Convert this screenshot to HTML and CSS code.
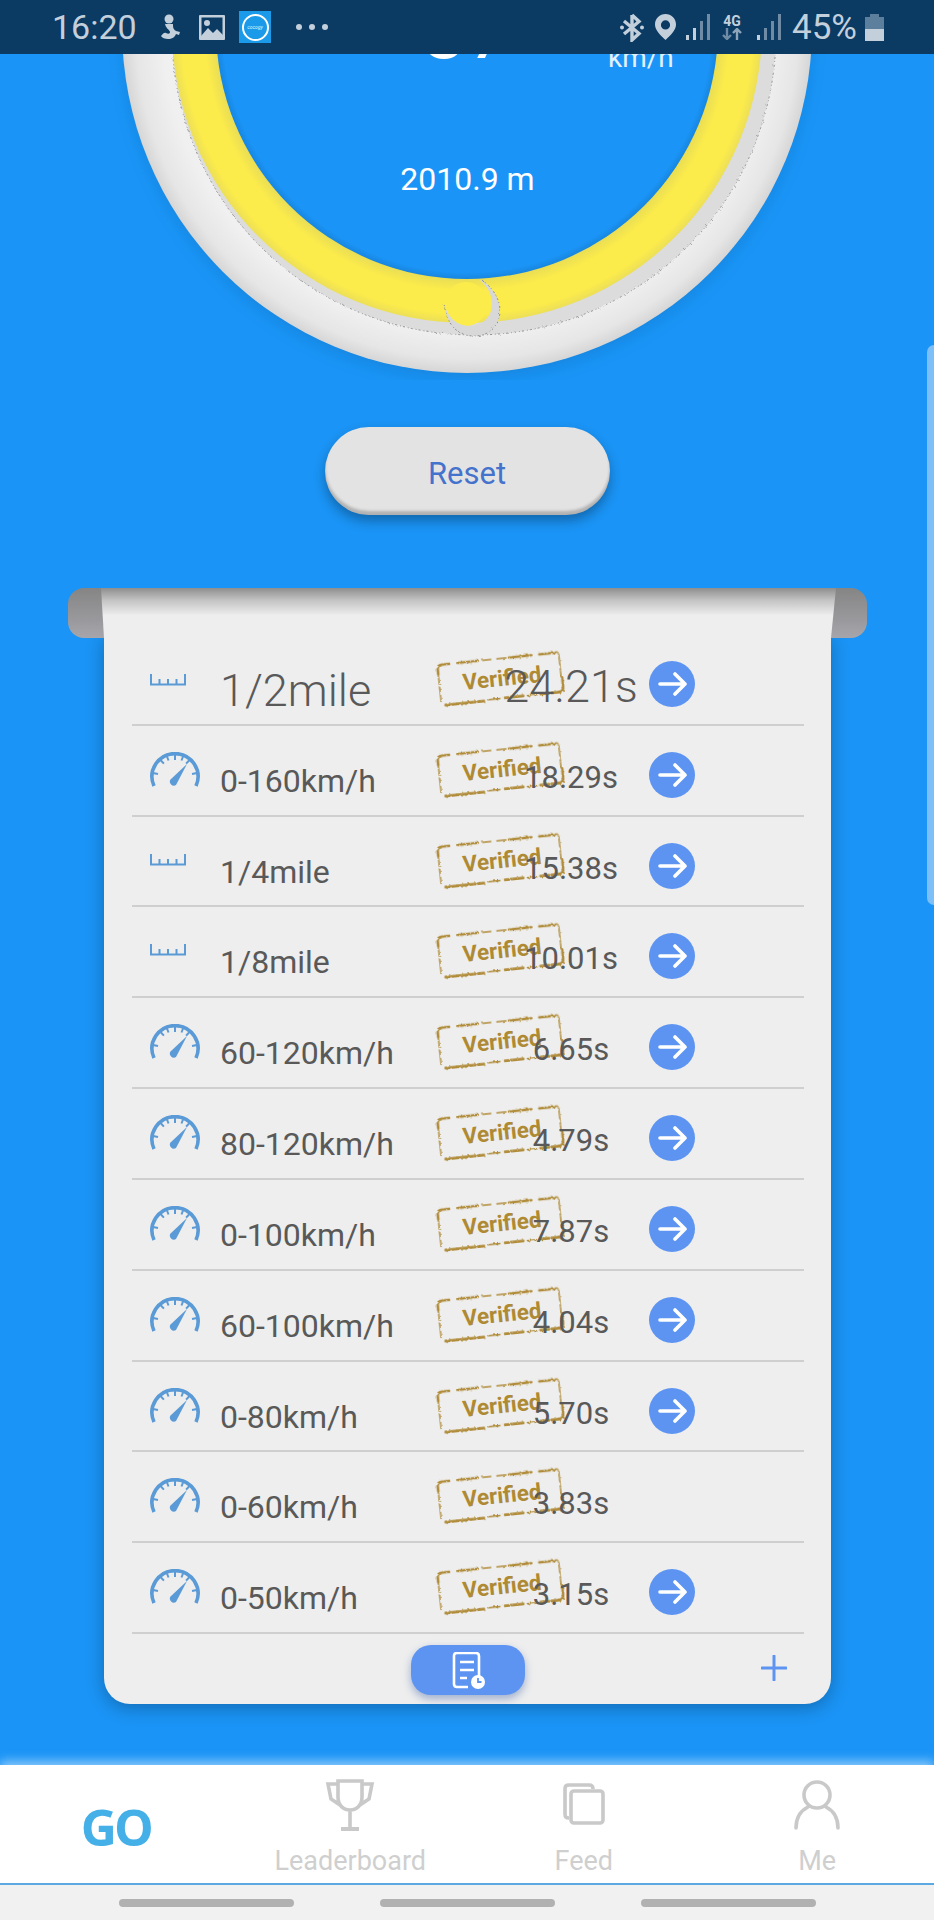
FILE: index.html
```html
<!DOCTYPE html>
<html lang="en">
<head>
  <meta charset="utf-8">
  <meta name="viewport" content="width=device-width, initial-scale=1">
  <title>Drag run</title>
  <link rel="stylesheet" href="styles.css">
</head>
<body>
  <svg class="defs" width="0" height="0">
    <defs>
      <filter id="rough" x="-5%" y="-10%" width="110%" height="120%">
        <feTurbulence type="fractalNoise" baseFrequency="0.45" numOctaves="2" seed="4"/>
        <feDisplacementMap in="SourceGraphic" scale="3"/>
      </filter>
      <path id="arrow-shape" d="M2 13h25M17 3l10 10-10 10" fill="none" stroke="#fff" stroke-width="3.600" stroke-linecap="round" stroke-linejoin="round"/>
      <path id="ruler-shape" d="M1 0v10.500h34V0M9.500 5v5M18 5v5M26.500 5v5" fill="none" stroke="#5a9ad6" stroke-width="2"/>
      <g id="dial-shape" fill="none" stroke="#5a9ad6">
        <path d="M4 34A23 23 0 1 1 46 34" stroke-width="3.600"/>
        <path d="M25 3v5M10.500 8l3.400 3.600M39.500 8l-3.400 3.600M3 21l5 1M47 21l-5 1M17 4.500l1.500 4M33 4.500l-1.500 4" stroke-width="2"/>
        <path d="M37 12L20.500 27.500a4 4 0 0 0 5.500 5.500z" fill="#5a9ad6" stroke="none"/>
      </g>
      <g id="stamp-shape" fill="none" stroke="#b08c3a" stroke-linecap="round" filter="url(#rough)">
        <path d="M3 12v28M123 5v22" stroke-width="1.400" stroke-dasharray="6 1 3 2 4 1"/>
        <path d="M3 12V7q0-4 5-4h7M23 3h20M74 3h22M104 3h18M124 28v9q0 5-5 5h-18M7 43h38M66 42h18" stroke-width="2.600"/>
        <path d="M48 3h8M62 3h9M49 42h12M88 42h10" stroke-width="1.400"/>
      </g>
    </defs>
  </svg>

  <div class="screen">
    <div class="status">
      <span class="clock">16:20</span>
      <svg class="st-person" width="24" height="26" viewBox="0 0 24 26"><circle cx="12" cy="5" r="4.500" fill="#c3d0dc"/><path d="M8 10h8c0 3 0 5 3 7l4 1-1 3-3-1c-1 3-4 5-8 5-3 0-6-1-7-3 2-3 4-4 5-3 2 1 4 1 4-1 0-2-5-4-5-9z" fill="#c3d0dc"/></svg>
      <svg class="st-photo" width="26" height="25" viewBox="0 0 26 25"><rect width="26" height="25" rx="1" fill="#c3d0dc"/><rect x="2.500" y="2.500" width="21" height="20" fill="#0b3a63"/><circle cx="8" cy="8" r="3" fill="#c3d0dc"/><path d="M2 21l7-8 5 5 4-4 6 6v5H2z" fill="#c3d0dc"/></svg>
      <span class="app-ico"><span class="app-ring">cocogy</span></span>
      <span class="dots"><i></i><i></i><i></i></span>
      <span class="st-right">
        <svg class="st-bt" width="24" height="29" viewBox="0 0 24 29"><path d="M12 2v25l7-6.500L4 8M12 2l7 6.500L4 21" fill="none" stroke="#c3d0dc" stroke-width="3.400"/><circle cx="2" cy="14.500" r="2" fill="#c3d0dc"/><circle cx="22" cy="14.500" r="2" fill="#c3d0dc"/></svg>
        <svg class="st-pin" width="21" height="26" viewBox="0 0 22 27"><path fill-rule="evenodd" d="M11 0c6 0 11 4.700 11 11 0 6-6 12-11 16C6 23 0 17 0 11 0 4.700 5 0 11 0zm0 6.500a4.800 4.800 0 1 0 0 9.600 4.800 4.800 0 0 0 0-9.600z" fill="#c3d0dc"/></svg>
        <svg class="st-bars" width="24" height="26" viewBox="0 0 24 26"><rect x="0" y="21" width="3" height="5" fill="#c3d0dc"/><rect x="7" y="14" width="3" height="12" fill="#c3d0dc"/><rect x="14" y="7" width="3" height="19" fill="#6f8ba5"/><rect x="21" y="0" width="3" height="26" fill="#6f8ba5"/></svg>
        <span class="net"><b>4G</b><svg width="20" height="12" viewBox="0 0 20 12"><path d="M5 0v10M1 7l4 4 4-4" fill="none" stroke="#6f8ba5" stroke-width="2.400"/><path d="M15 12V2M11 5l4-4 4 4" fill="none" stroke="#8ea4b9" stroke-width="2.400"/></svg></span>
        <svg class="st-bars2" width="24" height="26" viewBox="0 0 24 26"><rect x="0" y="21" width="3" height="5" fill="#c3d0dc"/><rect x="7" y="14" width="3" height="12" fill="#6f8ba5"/><rect x="14" y="7" width="3" height="19" fill="#6f8ba5"/><rect x="21" y="0" width="3" height="26" fill="#6f8ba5"/></svg>
        <span class="pct">45%</span>
        <svg class="st-batt" width="19" height="27" viewBox="0 0 19 27"><path d="M5 0h9v3h5v24H0V3h5z" fill="#5c7f9d"/><rect y="15" width="19" height="12" fill="#c3d0dc"/></svg>
      </span>
    </div>

    <div class="gauge">
      <svg class="ring" width="934" height="380" viewBox="0 0 934 380">
        <defs>
          <radialGradient id="shell" gradientUnits="userSpaceOnUse" cx="467" cy="28" r="345">
            <stop offset="0.88" stop-color="#f0f0f0"/>
            <stop offset="0.96" stop-color="#e6e6e6"/>
            <stop offset="1" stop-color="#d6d6d6"/>
          </radialGradient>
          <radialGradient id="lemon" gradientUnits="userSpaceOnUse" cx="467" cy="28" r="295">
            <stop offset="0.85" stop-color="#e9dd55"/>
            <stop offset="0.89" stop-color="#fbeb4b"/>
            <stop offset="0.97" stop-color="#fbeb4b"/>
            <stop offset="1" stop-color="#ecdf58"/>
          </radialGradient>
          <radialGradient id="inner" gradientUnits="userSpaceOnUse" cx="467" cy="28" r="252">
            <stop offset="0.97" stop-color="#1a94f6"/>
            <stop offset="1" stop-color="#1784dc"/>
          </radialGradient>
          <filter id="soft" x="-10%" y="-10%" width="120%" height="120%"><feGaussianBlur stdDeviation="7"/></filter>
        </defs>
        <circle cx="467" cy="34" r="345" fill="#0f6fbc" opacity=".35" filter="url(#soft)"/>
        <circle cx="467" cy="28" r="345" fill="url(#shell)"/>
        <circle cx="474" cy="33" r="302" fill="#dcdcdc" stroke="#8f8f8f" stroke-width="1" stroke-dasharray="2 2 1 3" filter="url(#rough)"/>
        <circle cx="467" cy="28" r="295" fill="url(#lemon)"/>
        <circle cx="467" cy="28" r="251" fill="url(#inner)"/>
        <circle cx="466" cy="304" r="22" fill="#fbeb4b"/>
        <path d="M482 280c12 9 18 20 18 31 0 14-10 25-26 25-15 0-27-9-30-33 3 13 12 23 26 23 12 0 22-9 22-22 0-9-4-17-12-24z" fill="#d8d8d8"/>
        <path d="M482 280c12 9 18 20 18 31 0 14-10 25-26 25-15 0-27-9-30-33" fill="none" stroke="#8f8f8f" stroke-dasharray="2 2 1 3" filter="url(#rough)"/>
      </svg>
      <span class="speed-num">37</span>
      <span class="speed-unit">km/h</span>
      <span class="dist">2010.9 m</span>
    </div>

    <div class="btn-wrap"><div class="reset">Reset</div></div>

    <div class="sheet">
      <div class="roller"></div>
      <div class="fold"></div>
      <div class="card">
        <div class="rows">
          <div class="row big">
            <svg class="ruler" width="36" height="12" viewBox="0 0 36 12"><use href="#ruler-shape"/></svg>
            <span class="name">1/2mile</span>
            <svg class="stamp" viewBox="0 0 126 45"><use href="#stamp-shape"/></svg>
            <span class="stamp-txt">Verified</span>
            <span class="time">24.21s</span>
            <span class="go"><svg width="29" height="26" viewBox="0 0 29 26"><use href="#arrow-shape"/></svg></span>
          </div>
          <div class="row">
            <svg class="dial" width="50" height="36" viewBox="0 0 50 36"><use href="#dial-shape"/></svg>
            <span class="name">0-160km/h</span>
            <svg class="stamp" viewBox="0 0 126 45"><use href="#stamp-shape"/></svg>
            <span class="stamp-txt">Verified</span>
            <span class="time">18.29s</span>
            <span class="go"><svg width="29" height="26" viewBox="0 0 29 26"><use href="#arrow-shape"/></svg></span>
          </div>
          <div class="row">
            <svg class="ruler" width="36" height="12" viewBox="0 0 36 12"><use href="#ruler-shape"/></svg>
            <span class="name">1/4mile</span>
            <svg class="stamp" viewBox="0 0 126 45"><use href="#stamp-shape"/></svg>
            <span class="stamp-txt">Verified</span>
            <span class="time">15.38s</span>
            <span class="go"><svg width="29" height="26" viewBox="0 0 29 26"><use href="#arrow-shape"/></svg></span>
          </div>
          <div class="row">
            <svg class="ruler" width="36" height="12" viewBox="0 0 36 12"><use href="#ruler-shape"/></svg>
            <span class="name">1/8mile</span>
            <svg class="stamp" viewBox="0 0 126 45"><use href="#stamp-shape"/></svg>
            <span class="stamp-txt">Verified</span>
            <span class="time">10.01s</span>
            <span class="go"><svg width="29" height="26" viewBox="0 0 29 26"><use href="#arrow-shape"/></svg></span>
          </div>
          <div class="row">
            <svg class="dial" width="50" height="36" viewBox="0 0 50 36"><use href="#dial-shape"/></svg>
            <span class="name">60-120km/h</span>
            <svg class="stamp" viewBox="0 0 126 45"><use href="#stamp-shape"/></svg>
            <span class="stamp-txt">Verified</span>
            <span class="time">6.65s</span>
            <span class="go"><svg width="29" height="26" viewBox="0 0 29 26"><use href="#arrow-shape"/></svg></span>
          </div>
          <div class="row">
            <svg class="dial" width="50" height="36" viewBox="0 0 50 36"><use href="#dial-shape"/></svg>
            <span class="name">80-120km/h</span>
            <svg class="stamp" viewBox="0 0 126 45"><use href="#stamp-shape"/></svg>
            <span class="stamp-txt">Verified</span>
            <span class="time">4.79s</span>
            <span class="go"><svg width="29" height="26" viewBox="0 0 29 26"><use href="#arrow-shape"/></svg></span>
          </div>
          <div class="row">
            <svg class="dial" width="50" height="36" viewBox="0 0 50 36"><use href="#dial-shape"/></svg>
            <span class="name">0-100km/h</span>
            <svg class="stamp" viewBox="0 0 126 45"><use href="#stamp-shape"/></svg>
            <span class="stamp-txt">Verified</span>
            <span class="time">7.87s</span>
            <span class="go"><svg width="29" height="26" viewBox="0 0 29 26"><use href="#arrow-shape"/></svg></span>
          </div>
          <div class="row">
            <svg class="dial" width="50" height="36" viewBox="0 0 50 36"><use href="#dial-shape"/></svg>
            <span class="name">60-100km/h</span>
            <svg class="stamp" viewBox="0 0 126 45"><use href="#stamp-shape"/></svg>
            <span class="stamp-txt">Verified</span>
            <span class="time">4.04s</span>
            <span class="go"><svg width="29" height="26" viewBox="0 0 29 26"><use href="#arrow-shape"/></svg></span>
          </div>
          <div class="row">
            <svg class="dial" width="50" height="36" viewBox="0 0 50 36"><use href="#dial-shape"/></svg>
            <span class="name">0-80km/h</span>
            <svg class="stamp" viewBox="0 0 126 45"><use href="#stamp-shape"/></svg>
            <span class="stamp-txt">Verified</span>
            <span class="time">5.70s</span>
            <span class="go"><svg width="29" height="26" viewBox="0 0 29 26"><use href="#arrow-shape"/></svg></span>
          </div>
          <div class="row">
            <svg class="dial" width="50" height="36" viewBox="0 0 50 36"><use href="#dial-shape"/></svg>
            <span class="name">0-60km/h</span>
            <svg class="stamp" viewBox="0 0 126 45"><use href="#stamp-shape"/></svg>
            <span class="stamp-txt">Verified</span>
            <span class="time">3.83s</span>
          </div>
          <div class="row">
            <svg class="dial" width="50" height="36" viewBox="0 0 50 36"><use href="#dial-shape"/></svg>
            <span class="name">0-50km/h</span>
            <svg class="stamp" viewBox="0 0 126 45"><use href="#stamp-shape"/></svg>
            <span class="stamp-txt">Verified</span>
            <span class="time">3.15s</span>
            <span class="go"><svg width="29" height="26" viewBox="0 0 29 26"><use href="#arrow-shape"/></svg></span>
          </div>
        </div>
        <div class="card-foot">
          <span class="foot-side"></span>
          <span class="hist">
            <svg width="34" height="37" viewBox="0 0 34 37"><path d="M17 35H6c-2 0-3-1-3-3V4c0-2 1-3 3-3h19c2 0 3 1 3 3v20" fill="none" stroke="#fff" stroke-width="2.600"/><path d="M9 10h14M9 18h14M9 26h7" stroke="#fff" stroke-width="2.600" fill="none"/><circle cx="27" cy="30" r="7" fill="#fff"/><path d="M27 26v4h3.500" stroke="#5d94f2" stroke-width="1.800" fill="none"/></svg>
          </span>
          <span class="foot-side foot-end">
            <svg width="26" height="26" viewBox="0 0 26 26"><path d="M13 1v24M1 13h24" stroke="#5d94f2" stroke-width="3" stroke-linecap="round"/></svg>
          </span>
        </div>
      </div>
    </div>

    <div class="scrollbar"></div>
    <div class="spacer"></div>

    <nav class="tabs">
      <div class="tab tab-go"><span class="go-txt">GO</span></div>
      <div class="tab">
        <svg width="50" height="52" viewBox="0 0 50 52"><path d="M13 2h24v16c0 8-5 13-12 13s-12-5-12-13zM13 5H3l3 15 9 6M37 5h10l-3 15-9 6M25 31v17" fill="none" stroke="#c9c9c9" stroke-width="3.600"/><path d="M16 48h18v4H16z" fill="#c9c9c9"/></svg>
        <span>Leaderboard</span>
      </div>
      <div class="tab">
        <svg class="ico-feed" width="42" height="42" viewBox="0 0 42 42"><path d="M6 35c-3 0-4-1-4-4V6c0-3 1-4 4-4h20c3 0 4 1 4 4" fill="none" stroke="#c9c9c9" stroke-width="3.600"/><rect x="8" y="8" width="32" height="32" rx="3" fill="#fff" stroke="#c9c9c9" stroke-width="3.600"/></svg>
        <span>Feed</span>
      </div>
      <div class="tab">
        <svg class="ico-me" width="46" height="50" viewBox="0 0 46 50"><ellipse cx="23" cy="15" rx="13" ry="13" fill="none" stroke="#c9c9c9" stroke-width="3.600"/><path d="M2 48c0-11 4-17 12-21M44 48c0-11-4-17-12-21" fill="none" stroke="#c9c9c9" stroke-width="3.600" stroke-linecap="round"/></svg>
        <span>Me</span>
      </div>
    </nav>
    <div class="softkeys"><i></i><i></i><i></i></div>
  </div>
</body>
</html>
```

FILE: styles.css
```css
* {
  box-sizing: border-box;
}
html, body {
  margin: 0;
  padding: 0;
}
body {
  font-family: Roboto, "Liberation Sans", sans-serif;
  background-color: #1a94f6;
}
.defs {
  position: absolute;
}
.screen {
  position: relative;
  width: 934px;
  height: 1920px;
  overflow: hidden;
  display: flex;
  flex-direction: column;
  background-color: #1a94f6;
}

/* status bar sits on top of the scrolled page */
.status {
  position: absolute;
  top: 0;
  left: 0;
  right: 0;
  height: 54px;
  z-index: 5;
  padding: 0 50px 0 52px;
  display: flex;
  align-items: center;
  background-color: #0b3a63;
  color: #c3d0dc;
}
.clock {
  font-size: 34px;
  width: 105px;
}
.st-photo {
  margin-left: 18px;
}
.app-ico {
  width: 32px;
  height: 32px;
  background-color: #1a9ae8;
  display: flex;
  align-items: center;
  justify-content: center;
  margin-left: 14px;
}
.app-ring {
  width: 27px;
  height: 27px;
  border: 2px solid #fff;
  border-radius: 50%;
  font-size: 5px;
  color: #dff;
  display: flex;
  align-items: center;
  justify-content: center;
  font-style: italic;
}
.dots {
  display: flex;
  gap: 7px;
  margin-left: 25px;
}
.dots i {
  width: 6px;
  height: 6px;
  border-radius: 50%;
  background-color: #c3d0dc;
}
.st-right {
  margin-left: auto;
  display: flex;
  align-items: center;
}
.st-pin {
  margin-left: 11px;
}
.st-bars {
  margin-left: 10px;
}
.net {
  display: flex;
  flex-direction: column;
  align-items: center;
  line-height: 1;
  margin-left: 12px;
}
.net b {
  font-size: 14px;
}
.st-bars2 {
  margin-left: 15px;
}
.pct {
  font-size: 35px;
  margin-left: 11px;
}
.st-batt {
  margin-left: 8px;
}

.gauge {
  position: relative;
  height: 380px;
  flex: none;
}
.ring {
  display: block;
}
.speed-num {
  position: absolute;
  left: 422px;
  top: -9px;
  font-size: 80px;
  line-height: 80px;
  color: #fff;
}
.speed-unit {
  position: absolute;
  left: 608px;
  top: 45px;
  font-size: 28px;
  line-height: 26px;
  color: #e4f1fc;
}
.dist {
  position: absolute;
  left: 1px;
  right: 0;
  top: 162px;
  text-align: center;
  font-size: 32px;
  line-height: 34px;
  color: #fff;
}

.btn-wrap {
  display: flex;
  justify-content: center;
  padding-top: 40px;
  height: 208px;
  flex: none;
}
.reset {
  width: 285px;
  height: 88px;
  margin-top: 7px;
  border-radius: 44px;
  background-color: #e3e3e3;
  box-shadow: 0 6px 12px rgba(0, 0, 0, .3), inset 0 -4px 3px rgba(0, 0, 0, .22);
  display: flex;
  align-items: center;
  justify-content: center;
  padding-top: 5px;
  font-size: 31px;
  color: #4472cc;
}

.sheet {
  position: relative;
  flex: none;
  padding: 0 103px 0 104px;
}
.roller {
  position: absolute;
  left: 68px;
  right: 67px;
  top: 0;
  height: 50px;
  z-index: 1;
  border-radius: 16px;
  background: linear-gradient(#858585, #a5a5ab);
}
.fold {
  position: relative;
  z-index: 1;
  height: 50px;
  margin: 0 -5px 0 -3px;
  background: linear-gradient(#8e8e8e, #c4c4c4 25%, #eeeeee 55%);
  clip-path: polygon(0 0, 100% 0, calc(100% - 5px) 100%, 3px 100%);
}
.card {
  position: relative;
  height: 1069px;
  background-color: #eeeeee;
  border-radius: 0 0 26px 26px;
  box-shadow: 0 4px 18px rgba(0, 0, 0, .28);
  padding: 0 27px 0 28px;
}
.rows {
  margin-top: -3px;
}
.row {
  position: relative;
  height: 90.83px;
  border-bottom: 2px solid #cfcfcf;
  display: grid;
  grid-template-columns: 88px 273px 156px 46px;
  align-items: start;
  color: #595959;
}
.dial {
  margin: 26px 0 0 18px;
}
.ruler {
  margin: 37px 0 0 18px;
}
.big .ruler {
  margin-top: 39px;
}
.name {
  margin-top: 37px;
  font-size: 32px;
  line-height: 36px;
}
.big .name {
  margin-top: 28px;
  font-size: 45px;
  font-weight: 300;
  line-height: 56px;
}
/* the stamp is laid over the row, the time runs across it */
.stamp {
  position: absolute;
  left: 304px;
  top: 20px;
  width: 128px;
  height: 47px;
  transform: rotate(-6deg);
}
.stamp-txt {
  position: absolute;
  left: 307px;
  top: 27px;
  width: 126px;
  text-align: center;
  transform: rotate(-6deg);
  font-size: 22.5px;
  line-height: 32px;
  font-weight: 700;
  color: #ae8a35;
}
.time {
  position: relative;
  grid-column: 3;
  margin-top: 34px;
  text-align: center;
  font-size: 31px;
  line-height: 36px;
}
.big .time {
  margin-top: 26px;
  font-size: 45px;
  font-weight: 300;
  line-height: 52px;
}
.go {
  grid-column: 4;
  margin-top: 26px;
  width: 46px;
  height: 46px;
  border-radius: 50%;
  background-color: #5d94f2;
  display: flex;
  align-items: center;
  justify-content: center;
}
.card-foot {
  display: grid;
  grid-template-columns: 279px 114px 1fr;
  padding-top: 11px;
}
.hist {
  height: 50px;
  border-radius: 20px;
  background-color: #5d94f2;
  box-shadow: 0 4px 8px rgba(40, 80, 160, .4);
  display: flex;
  align-items: center;
  justify-content: center;
}
.foot-end {
  display: flex;
  justify-content: flex-end;
  padding: 10px 17px 0 0;
}

.scrollbar {
  position: absolute;
  right: 0;
  top: 345px;
  width: 7px;
  height: 560px;
  border-radius: 7px 0 0 7px;
  background-color: #7dbff8;
}
.spacer {
  flex: 1;
}

.tabs {
  flex: none;
  height: 120px;
  background-color: #fff;
  border-bottom: 2px solid #5aa9e0;
  box-shadow: 0 -4px 10px rgba(255, 255, 255, .5);
  display: grid;
  grid-template-columns: repeat(4, 233.5px);
}
.tab {
  display: flex;
  flex-direction: column;
  align-items: center;
  justify-content: space-between;
  padding: 14px 0 6px;
  color: #cfcfcf;
  font-size: 27px;
}
.ico-feed {
  margin-top: 4px;
}
.ico-me {
  margin-top: 1px;
}
.tab-go {
  justify-content: center;
  padding: 5px 0 0;
}
.go-txt {
  font-family: "Open Sans", sans-serif;
  font-size: 50px;
  font-weight: 700;
  letter-spacing: -3px;
  margin-left: -2px;
  color: #45b0e8;
}
.softkeys {
  flex: none;
  height: 35px;
  background-color: #f1f1f1;
  display: flex;
  justify-content: center;
  align-items: center;
  gap: 86px;
}
.softkeys i {
  width: 175px;
  height: 8px;
  border-radius: 4px;
  background-color: #b1b1b1;
}
```
